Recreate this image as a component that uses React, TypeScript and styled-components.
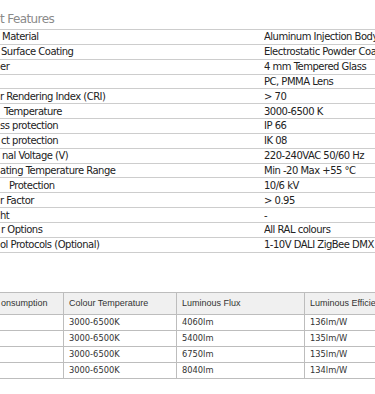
import React from 'react';
import styled, { createGlobalStyle } from 'styled-components';

const GlobalStyle = createGlobalStyle`
    html, body {
        margin: 0;
        padding: 0;
        background: #fff;
        overflow: hidden;
    }
`;

const specs: { label: string; indent: number; value: string }[] = [
    { label: 'Material', indent: 2, value: 'Aluminum Injection Body' },
    { label: 'Surface Coating', indent: 1, value: 'Electrostatic Powder Coating' },
    { label: 'er', indent: 0, value: '4 mm Tempered Glass' },
    { label: '', indent: 0, value: 'PC, PMMA Lens' },
    { label: 'r Rendering Index (CRI)', indent: 0, value: '> 70' },
    { label: 'Temperature', indent: 4, value: '3000-6500 K' },
    { label: 'ss protection', indent: 0, value: 'IP 66' },
    { label: 'ct protection', indent: 1, value: 'IK 08' },
    { label: 'nal Voltage (V)', indent: 2, value: '220-240VAC 50/60 Hz' },
    { label: 'ating Temperature Range', indent: 0, value: 'Min -20 Max +55 °C' },
    { label: 'Protection', indent: 9, value: '10/6 kV' },
    { label: 'r Factor', indent: 0, value: '> 0.95' },
    { label: 'ht', indent: 0, value: '-' },
    { label: 'r Options', indent: 1, value: 'All RAL colours' },
    { label: 'ol Protocols (Optional)', indent: 0, value: '1-10V DALI ZigBee DMX' },
];

const models = [
    { cct: '3000-6500K', flux: '4060lm', efficacy: '136lm/W' },
    { cct: '3000-6500K', flux: '5400lm', efficacy: '135lm/W' },
    { cct: '3000-6500K', flux: '6750lm', efficacy: '135lm/W' },
    { cct: '3000-6500K', flux: '8040lm', efficacy: '134lm/W' },
];

export default function App() {
    return <Page>
        <GlobalStyle />
        <Heading>t Features</Heading>
        <SpecList>
            {specs.map((s, i) => <SpecRow key={i}>
                <SpecLabel indent={s.indent}>{s.label}</SpecLabel>
                <SpecValue>{s.value}</SpecValue>
            </SpecRow>)}
        </SpecList>
        <ModelTable>
            <colgroup>
                <col style={{ width: 64 }} />
                <col style={{ width: 113 }} />
                <col style={{ width: 128 }} />
                <col style={{ width: 160 }} />
            </colgroup>
            <thead>
                <tr>
                    <HeadCell>onsumption</HeadCell>
                    <HeadCell>Colour Temperature</HeadCell>
                    <HeadCell>Luminous Flux</HeadCell>
                    <HeadCell>Luminous Efficiency</HeadCell>
                </tr>
            </thead>
            <tbody>
                {models.map((m, i) => <tr key={i}>
                    <DataCell></DataCell>
                    <DataCell>{m.cct}</DataCell>
                    <DataCell>{m.flux}</DataCell>
                    <DataCell>{m.efficacy}</DataCell>
                </tr>)}
            </tbody>
        </ModelTable>
    </Page>;
}

const Page = styled.div`
    width: 375px;
    height: 394px;
    overflow: hidden;
    font-family: 'DejaVu Sans', sans-serif;
`

const Heading = styled.div`
    height: 29px;
    box-sizing: border-box;
    padding-top: 12px;
    font-size: 12px;
    letter-spacing: -0.6px;
    line-height: 15px;
    color: #8a8a8a;
    white-space: nowrap;
`

const SpecList = styled.div`
    border-top: 1px solid #cdcdcd;
`

const SpecRow = styled.div`
    display: grid;
    grid-template-columns: 264px 1fr;
    height: 14.85px;
    box-sizing: border-box;
    border-bottom: 1px solid #cdcdcd;
    align-items: center;
    font-size: 10px;
    letter-spacing: -0.5px;
    color: #222;
    white-space: nowrap;
    overflow: hidden;
`

const SpecLabel = styled.div<{ indent: number }>`
    padding-left: ${p => p.indent}px;
`

const SpecValue = styled.div`
    overflow: hidden;
`

const ModelTable = styled.table`
    margin-top: 39px;
    margin-left: -1px;
    border-collapse: collapse;
    table-layout: fixed;
    width: 465px;
    font-family: 'Liberation Sans', Arial, sans-serif;
    color: #333;
`

const HeadCell = styled.th`
    height: 21px;
    padding: 0 5px;
    border: 1px solid #bdbdbd;
    background: #f0f0f0;
    font-size: 9px;
    font-weight: normal;
    text-align: left;
    white-space: nowrap;
    overflow: hidden;
    &:first-child { padding-left: 1px; }
`

const DataCell = styled.td`
    height: 15px;
    padding: 0 5px;
    border: 1px solid #bdbdbd;
    font-family: 'DejaVu Sans', Verdana, sans-serif;
    font-size: 8.3px;
    white-space: nowrap;
`
